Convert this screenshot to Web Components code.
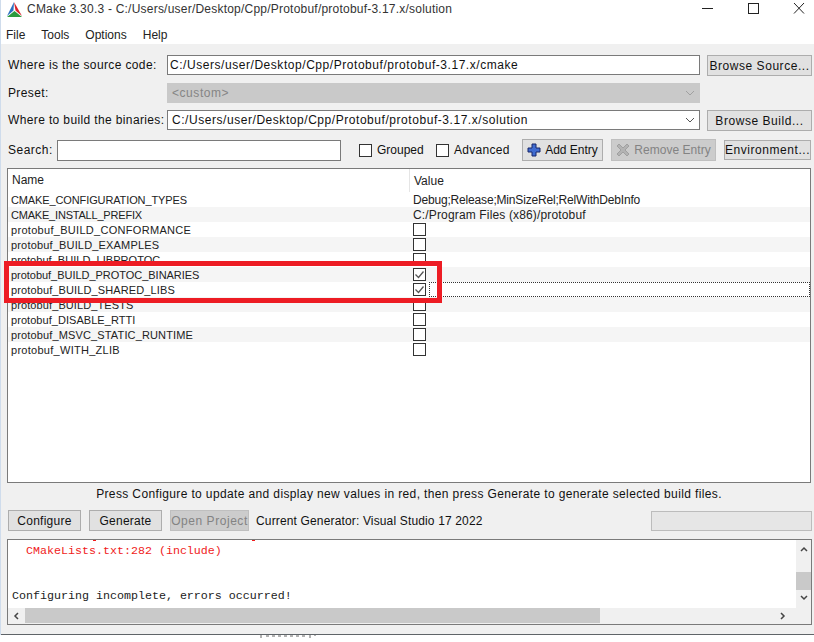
<!DOCTYPE html>
<html>
<head>
<meta charset="utf-8">
<title>CMake</title>
<style>
  html, body { margin: 0; padding: 0; background: #fff; }
  body { font: 12px "Liberation Sans", Arial, sans-serif; color: #111; width: 814px; height: 642px; overflow: hidden; }
</style>
</head>
<body>
<cm-window>
  <cm-titlebar slot="top">CMake 3.30.3 - C:/Users/user/Desktop/Cpp/Protobuf/protobuf-3.17.x/solution</cm-titlebar>
  <cm-menu slot="top"></cm-menu>

  <cm-path-row label="Where is the source code:" value="C:/Users/user/Desktop/Cpp/Protobuf/protobuf-3.17.x/cmake" button="Browse Source..." gap="8"></cm-path-row>
  <cm-path-row label="Preset:" value="<custom>" disabled combo gap="7"></cm-path-row>
  <cm-path-row label="Where to build the binaries:" value="C:/Users/user/Desktop/Cpp/Protobuf/protobuf-3.17.x/solution" button="Browse Build..." combo gap="9"></cm-path-row>
  <cm-search-bar></cm-search-bar>
  <cm-table></cm-table>
  <cm-status>Press Configure to update and display new values in red, then press Generate to generate selected build files.</cm-status>
  <cm-actions></cm-actions>
  <cm-log></cm-log>
</cm-window>

<script>
// small helper so every component gets an open shadow root
class Base extends HTMLElement {
  constructor() {
    super();
    this.attachShadow({ mode: 'open' });
  }
}

class CmWindow extends Base {
  constructor() {
    super();
    this.shadowRoot.innerHTML = `
      <style>
        :host { display: block; width: 814px; height: 642px; position: relative; overflow: hidden; background: #fff; }
        .panel { height: 591px; background: #f0f0f0; border-bottom: 1px solid #5f6468; box-sizing: border-box; padding-top: 11px; display: flex; flex-direction: column; }
        .edge { position: absolute; left: 0; top: 0; width: 1px; height: 635px; background: #cfdcec; }
        /* window behind this one just peeks out under the panel */
        .behind { position: absolute; left: 260px; top: 635px; display: block; }
      </style>
      <slot name="top"></slot>
      <div class="panel"><slot></slot></div>
      <div class="edge"></div>
      <svg class="behind" width="160" height="3" viewBox="0 0 160 3">
        <path d="M1 0V3M6 1H9M12 1H15M18 1H21M24 1H27M30 1H33M36 1H39M42 1H45M50 0V3M54 0H56" stroke="#666" fill="none"/>
      </svg>
    `;
  }
}

class CmTitlebar extends Base {
  constructor() {
    super();
    this.shadowRoot.innerHTML = `
      <style>
        :host { display: flex; align-items: center; height: 18px; padding: 0 0 0 6px; font-size: 12px; color: #333; }
        .logo { width: 17px; height: 17px; flex: none; margin-right: 4px; }
        .text { flex: 1; white-space: nowrap; letter-spacing: .22px; }
        .btns { display: flex; }
        .btns svg { height: 18px; display: block; }
      </style>
      <svg class="logo" viewBox="0 0 17 17">
        <polygon points="8,1 1,15 7.5,9.5" fill="#2a6fc0"/>
        <polygon points="8,1 16,15 9.5,9.5" fill="#d8232a"/>
        <polygon points="1,16 16,16 8.5,10" fill="#2c9a3e"/>
      </svg>
      <span class="text"><slot></slot></span>
      <div class="btns">
        <svg width="46" viewBox="0 0 46 18"><path d="M18 8.5H29" stroke="#222" fill="none"/></svg>
        <svg width="46" viewBox="0 0 46 18"><rect x="18.5" y="3.5" width="10" height="10" stroke="#222" fill="none"/></svg>
        <svg width="38" viewBox="0 0 38 18"><path d="M18 3L28 13.5M28 3L18 13.5" stroke="#222" fill="none"/></svg>
      </div>
    `;
  }
}

class CmMenu extends Base {
  constructor() {
    super();
    this.shadowRoot.innerHTML = `
      <style>
        :host { display: flex; height: 26px; box-sizing: border-box; padding: 7px 0 0 6px; align-items: center; gap: 16px; background: #fff; color: #222; }
      </style>
      <span>File</span><span>Tools</span><span>Options</span><span>Help</span>
    `;
  }
}

class CmButton extends Base {
  constructor() {
    super();
    this.shadowRoot.innerHTML = `
      <style>
        :host { display: inline-flex; align-items: center; justify-content: center; gap: 4px; box-sizing: border-box; height: 21px; background: #e1e1e1; border: 1px solid #adadad; letter-spacing: .55px; white-space: nowrap; flex: none; }
        :host([disabled]) { background: #cccccc; border-color: #bfbfbf; color: #838383; }
      </style>
      <slot></slot>
    `;
  }
}

class CmField extends Base {
  constructor() {
    super();
    this.shadowRoot.innerHTML = `
      <style>
        :host { display: flex; align-items: center; box-sizing: border-box; height: 20px; background: #fff; border: 1px solid #7a7a7a; padding: 0 2px; letter-spacing: .55px; white-space: nowrap; overflow: hidden; flex: none; }
        :host([combo]) { padding-left: 4px; }
        :host([disabled]) { background: #c9c9c9; border-color: #c9c9c9; color: #858585; }
        .v { flex: 1; }
        svg { width: 10px; height: 6px; margin-right: 2px; display: none; }
        :host([combo]) svg { display: block; }
        :host([disabled]) svg { opacity: .35; }
      </style>
      <span class="v"><slot></slot></span>
      <svg viewBox="0 0 10 6"><path d="M1 1L5 5L9 1" fill="none" stroke="#555" stroke-width="1"/></svg>
    `;
  }
}

class CmPathRow extends Base {
  connectedCallback() {
    const combo = this.hasAttribute('combo') ? 'combo' : '';
    const disabled = this.hasAttribute('disabled') ? 'disabled' : '';
    const button = this.getAttribute('button');
    const gap = this.getAttribute('gap') || 7;
    this.shadowRoot.innerHTML = `
      <style>
        :host { display: flex; align-items: flex-start; height: 21px; margin-bottom: ${gap - 1}px; padding-left: 8px; }
        .label { width: 159px; flex: none; line-height: 20px; letter-spacing: .37px; white-space: nowrap; }
        cm-field { width: 533px; }
        cm-button { width: 105px; margin-left: 7px; }
      </style>
      <span class="label"></span>
      <cm-field ${combo} ${disabled}></cm-field>
      ${button ? '<cm-button></cm-button>' : ''}
    `;
    this.shadowRoot.querySelector('.label').textContent = this.getAttribute('label');
    this.shadowRoot.querySelector('cm-field').textContent = this.getAttribute('value');
    if (button) this.shadowRoot.querySelector('cm-button').textContent = button;
  }
}

class CmCheck extends Base {
  constructor() {
    super();
    this.shadowRoot.innerHTML = `
      <style>
        :host { display: inline-flex; align-items: center; gap: 5px; letter-spacing: .3px; }
        svg { width: 13px; height: 13px; flex: none; display: block; }
        path { display: none; }
        :host([checked]) path { display: block; }
      </style>
      <svg viewBox="0 0 13 13">
        <rect x=".5" y=".5" width="12" height="12" fill="#fff" stroke="#333"/>
        <path d="M2.5 6.5L5.5 9.5L10.5 3.5" fill="none" stroke="#555" stroke-width="1.3"/>
      </svg>
      <slot></slot>
    `;
  }
}

class CmSearchBar extends Base {
  constructor() {
    super();
    this.shadowRoot.innerHTML = `
      <style>
        :host { display: flex; align-items: center; height: 22px; padding-left: 8px; margin-bottom: 7px; }
        .label { width: 49px; letter-spacing: .5px; flex: none; }
        cm-field { width: 284px; height: 21px; }
        .g { margin-left: 18px; width: 77px; letter-spacing: 0; }
        .a { width: 86px; }
        cm-button.add { width: 81px; height: 22px; letter-spacing: 0; }
        cm-button.rm { width: 105px; height: 22px; margin-left: 8px; letter-spacing: .03px; }
        cm-button.env { width: 87px; margin-left: 8px; height: 20px; }
        svg { width: 14px; height: 14px; flex: none; }
      </style>
      <span class="label">Search:</span>
      <cm-field></cm-field>
      <cm-check class="g">Grouped</cm-check>
      <cm-check class="a">Advanced</cm-check>
      <cm-button class="add">
        <svg viewBox="0 0 14 14"><path d="M5 1H9V5H13V9H9V13H5V9H1V5H5Z" fill="#3f6bd0" stroke="#16276b"/></svg>
        <span>Add Entry</span>
      </cm-button>
      <cm-button class="rm" disabled>
        <svg viewBox="0 0 14 14"><path d="M3 1L7 5L11 1L13 3L9 7L13 11L11 13L7 9L3 13L1 11L5 7L1 3Z" fill="#b3b3b3" stroke="#a0a0a0"/></svg>
        <span>Remove Entry</span>
      </cm-button>
      <cm-button class="env">Environment...</cm-button>
    `;
  }
}

class CmRow extends Base {
  connectedCallback() {
    const val = this.getAttribute('value');
    const isBool = val === 'on' || val === 'off';
    this.shadowRoot.innerHTML = `
      <style>
        :host { display: flex; height: 15px; align-items: center; white-space: nowrap; color: #222; }
        :host(:nth-child(even)) { background: #f5f5f5; }
        .name { width: 399px; padding-left: 3px; flex: none; overflow: hidden; font-size: 11px; letter-spacing: ${this.getAttribute('name-track') || 0}px; }
        .val { flex: 1; padding-left: 3px; display: flex; align-items: center; letter-spacing: ${this.getAttribute('track') || 0}px; }
        cm-check { height: 13px; }
        .focus { box-sizing: border-box; height: 15px; flex: 1; margin-left: 3px; border: 1px dotted #333; }
      </style>
      <span class="name"><slot></slot></span>
      <span class="val">
        ${isBool ? `<cm-check ${val === 'on' ? 'checked' : ''}></cm-check>` : ''}
      </span>
    `;
    if (!isBool) this.shadowRoot.querySelector('.val').textContent = val;
    if (this.hasAttribute('focus')) {
      this.shadowRoot.querySelector('.val').insertAdjacentHTML('beforeend', '<span class="focus"></span>');
    }
  }
}

class CmTable extends Base {
  constructor() {
    super();
    const rows = [
      { name: 'CMAKE_CONFIGURATION_TYPES', value: 'Debug;Release;MinSizeRel;RelWithDebInfo', track: -.18, nameTrack: -.12 },
      { name: 'CMAKE_INSTALL_PREFIX', value: 'C:/Program Files (x86)/protobuf', track: .15, nameTrack: -.2 },
      { name: 'protobuf_BUILD_CONFORMANCE', value: 'off', nameTrack: .3 },
      { name: 'protobuf_BUILD_EXAMPLES', value: 'off', nameTrack: .17 },
      { name: 'protobuf_BUILD_LIBPROTOC', value: 'off', nameTrack: .04 },
      { name: 'protobuf_BUILD_PROTOC_BINARIES', value: 'on', nameTrack: -.03 },
      { name: 'protobuf_BUILD_SHARED_LIBS', value: 'on', focus: true, nameTrack: .12 },
      { name: 'protobuf_BUILD_TESTS', value: 'off', nameTrack: .1 },
      { name: 'protobuf_DISABLE_RTTI', value: 'off', nameTrack: .05 },
      { name: 'protobuf_MSVC_STATIC_RUNTIME', value: 'off', nameTrack: .14 },
      { name: 'protobuf_WITH_ZLIB', value: 'off', nameTrack: .28 },
    ];
    this.shadowRoot.innerHTML = `
      <style>
        :host { display: block; position: relative; box-sizing: border-box; height: 315px; margin: 0 3px 0 7px; background: #fff; border: 1px solid #7a7a7a; }
        .head { display: flex; height: 23px; align-items: center; background: #fff; color: #222; }
        .head span { padding-left: 4px; }
        .head span:first-child { width: 397px; border-right: 1px solid #e5e5e5; height: 23px; line-height: 23px; }
        .mark { position: absolute; left: -4px; top: 92px; width: 428px; height: 32px; border: 5px solid #ed1c24; pointer-events: none; }
      </style>
      <div class="head"><span>Name</span><span>Value</span></div>
      <div class="rows"></div>
      <div class="mark"></div>
    `;
    const box = this.shadowRoot.querySelector('.rows');
    rows.forEach((row) => {
      const r = document.createElement('cm-row');
      r.textContent = row.name;
      r.setAttribute('value', row.value);
      if (row.focus) r.setAttribute('focus', '');
      if (row.track) r.setAttribute('track', row.track);
      if (row.nameTrack) r.setAttribute('name-track', row.nameTrack);
      box.appendChild(r);
    });
  }
}

class CmStatus extends Base {
  constructor() {
    super();
    this.shadowRoot.innerHTML = `
      <style>
        :host { display: block; text-align: center; height: 27px; line-height: 22px; letter-spacing: .37px; padding-left: 4px; white-space: nowrap; }
      </style>
      <slot></slot>
    `;
  }
}

class CmActions extends Base {
  constructor() {
    super();
    this.shadowRoot.innerHTML = `
      <style>
        :host { display: flex; align-items: center; height: 21px; padding-left: 8px; margin-bottom: 8px; }
        cm-button { width: 73px; margin-right: 8px; letter-spacing: .25px; }
        cm-button[disabled] { width: 79px; margin-right: 7px; letter-spacing: .55px; }
        .gen { letter-spacing: .15px; flex: 1; white-space: nowrap; }
        .bar { width: 161px; height: 20px; margin-right: 2px; box-sizing: border-box; background: #e6e6e6; border: 1px solid #bcbcbc; }
      </style>
      <cm-button>Configure</cm-button>
      <cm-button>Generate</cm-button>
      <cm-button disabled>Open Project</cm-button>
      <span class="gen">Current Generator: Visual Studio 17 2022</span>
      <div class="bar"></div>
    `;
  }
}

class CmLog extends Base {
  constructor() {
    super();
    this.shadowRoot.innerHTML = `
      <style>
        :host { display: grid; grid-template-columns: 1fr 15px; grid-template-rows: 68px 16px; box-sizing: border-box; height: 86px; margin: 0 2px 0 7px; background: #fff; border: 1px solid #7a7a7a; }
        .text { font: 11.67px "Liberation Mono", "Courier New", monospace; color: #222; padding: 4px 0 0 4px; overflow: hidden; position: relative; box-sizing: border-box; }
        .text div { height: 15px; line-height: 15px; white-space: pre; }
        .err { color: #f01c1c; }
        /* bottoms of the parentheses of the line scrolled out above */
        .text i { position: absolute; top: 0; width: 3px; height: 1px; background: #f01c1c; }
        .v { background: #f0f0f0; position: relative; display: flex; flex-direction: column; justify-content: space-between; align-items: center; padding: 6px 0 7px; box-sizing: border-box; }
        .v .thumb { position: absolute; left: 0; right: 0; top: 32px; height: 18px; background: #c9c9c9; }
        .h { background: #f0f0f0; position: relative; display: flex; justify-content: space-between; align-items: center; padding: 0 10px 0 5px; grid-column: 1; }
        .h .thumb { position: absolute; left: 17px; width: 575px; top: 0; bottom: 1px; background: #c9c9c9; }
        .c { background: #f0f0f0; }
        svg { width: 8px; height: 6px; display: block; }
        .h svg { width: 6px; height: 8px; }
      </style>
      <div class="text">
        <i style="left:85px"></i><i style="left:244px"></i>
        <div class="err">  CMakeLists.txt:282 (include)</div>
        <div>&nbsp;</div>
        <div>&nbsp;</div>
        <div>Configuring incomplete, errors occurred!</div>
      </div>
      <div class="v">
        <svg viewBox="0 0 8 6"><path d="M1 5L4 2L7 5" fill="none" stroke="#444" stroke-width="1.5"/></svg>
        <div class="thumb"></div>
        <svg viewBox="0 0 8 6"><path d="M1 1L4 4L7 1" fill="none" stroke="#444" stroke-width="1.5"/></svg>
      </div>
      <div class="h">
        <svg viewBox="0 0 6 8"><path d="M5 1L2 4L5 7" fill="none" stroke="#444" stroke-width="1.5"/></svg>
        <div class="thumb"></div>
        <svg viewBox="0 0 6 8"><path d="M1 1L4 4L1 7" fill="none" stroke="#444" stroke-width="1.5"/></svg>
      </div>
      <div class="c"></div>
    `;
  }
}

customElements.define('cm-window', CmWindow);
customElements.define('cm-titlebar', CmTitlebar);
customElements.define('cm-menu', CmMenu);
customElements.define('cm-button', CmButton);
customElements.define('cm-field', CmField);
customElements.define('cm-path-row', CmPathRow);
customElements.define('cm-check', CmCheck);
customElements.define('cm-search-bar', CmSearchBar);
customElements.define('cm-row', CmRow);
customElements.define('cm-table', CmTable);
customElements.define('cm-status', CmStatus);
customElements.define('cm-actions', CmActions);
customElements.define('cm-log', CmLog);
</script>
</body>
</html>
